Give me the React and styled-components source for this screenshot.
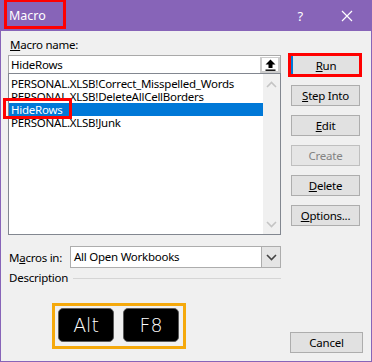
import styled, { createGlobalStyle } from "styled-components";

const GlobalStyle = createGlobalStyle`
  html, body {
    margin: 0;
    padding: 0;
    background: #f0f0f0;
  }
  body {
    font-family: "Noto Sans", "Liberation Sans", sans-serif;
    font-size: 11.5px;
    letter-spacing: -0.25px;
  }
`;

const macros = [
  "PERSONAL.XLSB!Correct_Misspelled_Words",
  "PERSONAL.XLSB!DeleteAllCellBorders",
  "HideRows",
  "PERSONAL.XLSB!Junk",
];

const buttons = [
  { key: "run", label: "Run", hot: "R", primary: true },
  { key: "step", label: "Step Into", hot: "S" },
  { key: "edit", label: "Edit", hot: "E" },
  { key: "create", label: "Create", disabled: true },
  { key: "delete", label: "Delete", hot: "D" },
  { key: "options", label: "Options...", hot: "O" },
];

const Mnemonic = ({ text, hot }) => {
  if (!hot) return text;
  const i = text.indexOf(hot);
  return (
    <>
      {text.slice(0, i)}
      <u>{hot}</u>
      {text.slice(i + 1)}
    </>
  );
};

const Chevron = ({ up, color }) => (
  <svg width="11" height="7" viewBox="0 0 11 7">
    <path
      d={up ? "M1 6 L5.5 1.5 L10 6" : "M1 1 L5.5 5.5 L10 1"}
      fill="none"
      stroke={color}
      strokeWidth="1.6"
    />
  </svg>
);

const App = () => {
  return (
    <>
      <GlobalStyle />
      <Dialog>
        <TitleBar>
          <TitleText>
            Macro
            <Highlight />
          </TitleText>
          <TitleIcons>
            <HelpMark>?</HelpMark>
            <svg width="12" height="12" viewBox="0 0 12 12">
              <path d="M1 1 L11 11 M11 1 L1 11" stroke="#fff" strokeWidth="1.2" />
            </svg>
          </TitleIcons>
        </TitleBar>
        <Body>
          <LeftCol>
            <Label>
              <u>M</u>acro name:
            </Label>
            <NameInput>
              <NameValue>HideRows</NameValue>
              <PickButton>
                <svg width="11" height="12" viewBox="0 0 11 12">
                  <path d="M5.5 0.5 L10.5 5.5 L7.5 5.5 L7.5 9 L3.5 9 L3.5 5.5 L0.5 5.5 Z" fill="#000" />
                  <rect x="0.5" y="10.5" width="10" height="1.4" fill="#000" />
                </svg>
              </PickButton>
            </NameInput>
            <ListBox>
              <Items>
                {macros.map((m) => (
                  <Item key={m} $selected={m === "HideRows"}>
                    {m}
                    {m === "HideRows" && <ItemHighlight />}
                  </Item>
                ))}
              </Items>
              <ScrollTrack>
                <Chevron up color="#c4c4c4" />
                <Chevron color="#c4c4c4" />
              </ScrollTrack>
            </ListBox>
            <MacrosRow>
              <RowLabel>
                M<u>a</u>cros in:
              </RowLabel>
              <Select>
                <SelectValue>All Open Workbooks</SelectValue>
                <SelectButton>
                  <Chevron color="#444" />
                </SelectButton>
              </Select>
            </MacrosRow>
            <DescriptionRow>
              Description
              <Rule />
            </DescriptionRow>
            <KeysBox>
              <Key>Alt</Key>
              <Key>F8</Key>
            </KeysBox>
          </LeftCol>
          <RightCol>
            {buttons.map((b) => (
              <Button key={b.key} $primary={b.primary} disabled={b.disabled}>
                <Mnemonic text={b.label} hot={b.hot} />
                {b.primary && <ButtonHighlight />}
              </Button>
            ))}
            <CancelButton>Cancel</CancelButton>
          </RightCol>
        </Body>
      </Dialog>
    </>
  );
};

const Dialog = styled.div`
  width: 372px;
  height: 362px;
  box-sizing: border-box;
  border: 1px solid #8764b8;
  border-top: none;
  background: #f0f0f0;
  display: flex;
  flex-direction: column;
  color: #000;
`;

const TitleBar = styled.div`
  height: 31px;
  margin: 0 -1px;
  background: #8764b8;
  display: flex;
  align-items: center;
  justify-content: space-between;
  color: #fff;
  flex-shrink: 0;
`;

const TitleText = styled.div`
  position: relative;
  margin-left: 9px;
  font-size: 12.5px;
  line-height: 16px;
  letter-spacing: 0;
`;

const Highlight = styled.span`
  position: absolute;
  left: -5px;
  right: -20px;
  top: -9px;
  bottom: -5px;
  border: 3px solid #ff0000;
`;

const TitleIcons = styled.div`
  display: flex;
  align-items: center;
  gap: 38px;
  margin-right: 19px;
`;

const HelpMark = styled.span`
  font-size: 13px;
`;

const Body = styled.div`
  flex: 1;
  display: flex;
`;

const LeftCol = styled.div`
  width: 273px;
  margin-left: 7px;
  display: flex;
  flex-direction: column;
`;

const Label = styled.div`
  margin-top: 6px;
  margin-left: 2px;
  line-height: 16px;
`;

const NameInput = styled.div`
  margin-top: 2px;
  height: 18px;
  box-sizing: border-box;
  border: 1px solid #a9a9a9;
  border-bottom: none;
  background: #fff;
  display: flex;
  align-items: center;
  justify-content: space-between;
`;

const NameValue = styled.span`
  padding-left: 2px;
  line-height: 16px;
`;

const PickButton = styled.div`
  width: 20px;
  height: 16px;
  margin-top: 1px;
  box-sizing: border-box;
  border: 2px solid #cccccc;
  border-top-width: 1px;
  display: flex;
  align-items: center;
  justify-content: center;
`;

const ListBox = styled.div`
  height: 162px;
  box-sizing: border-box;
  border: 1px solid #828790;
  background: #fff;
  display: flex;
`;

const Items = styled.div`
  flex: 1;
  padding-top: 3px;
`;

const Item = styled.div`
  position: relative;
  height: 13px;
  line-height: 13px;
  padding-left: 2px;
  white-space: nowrap;
  background: ${(p) => (p.$selected ? "#0078d7" : "transparent")};
  color: ${(p) => (p.$selected ? "#fff" : "#000")};
`;

const ItemHighlight = styled.span`
  position: absolute;
  left: -6px;
  top: -5px;
  width: 69px;
  height: 21px;
  box-sizing: border-box;
  border: 3px solid #ff0000;
`;

const ScrollTrack = styled.div`
  width: 17px;
  background: #f0f0f0;
  display: flex;
  flex-direction: column;
  align-items: center;
  justify-content: space-between;
  padding: 7px 0 6px;
`;

const MacrosRow = styled.div`
  margin-top: 11px;
  display: flex;
  align-items: center;
`;

const RowLabel = styled.span`
  width: 61px;
  padding-left: 1px;
`;

const Select = styled.div`
  flex: 1;
  height: 22px;
  box-sizing: border-box;
  border: 1px solid #adadad;
  background: #fff;
  display: flex;
  align-items: stretch;
`;

const SelectValue = styled.span`
  flex: 1;
  padding-left: 3px;
  line-height: 20px;
`;

const SelectButton = styled.span`
  width: 18px;
  background: #e5e5e5;
  border-left: 1px solid #adadad;
  display: flex;
  align-items: center;
  justify-content: center;
`;

const DescriptionRow = styled.div`
  margin-top: 2px;
  padding-left: 1px;
  line-height: 16px;
  display: flex;
  align-items: center;
  gap: 5px;
`;

const Rule = styled.span`
  flex: 1;
  height: 1px;
  background: #d5d5d5;
`;

const KeysBox = styled.div`
  margin: 17px 0 0 44px;
  width: 134px;
  height: 46px;
  box-sizing: border-box;
  border: 3px solid #f5a90c;
  display: flex;
  gap: 9px;
  padding: 2px 3px;
`;

const Key = styled.div`
  width: 56px;
  height: 34px;
  box-sizing: border-box;
  border: 1px solid #5a5a5a;
  border-radius: 5px;
  background: #000;
  color: #fff;
  font-family: "DejaVu Sans", sans-serif;
  font-weight: 300;
  font-size: 19px;
  letter-spacing: 0;
  display: flex;
  align-items: center;
  justify-content: center;
`;

const RightCol = styled.div`
  flex: 1;
  display: flex;
  flex-direction: column;
  align-items: flex-start;
  padding: 24px 0 8px 10px;
  gap: 9px;
`;

const Button = styled.button`
  position: relative;
  width: 69px;
  height: 21px;
  padding: 0;
  box-sizing: border-box;
  font: inherit;
  letter-spacing: inherit;
  background: #e1e1e1;
  border: 1px solid ${(p) => (p.$primary ? "#0078d7" : "#adadad")};
  border-left-width: ${(p) => (p.$primary ? "2px" : "1px")};
  color: #000;

  &:disabled {
    color: #838383;
    border-color: #bfbfbf;
    background: #e5e5e5;
  }
`;

const ButtonHighlight = styled.span`
  position: absolute;
  left: -5px;
  right: -3px;
  top: -3px;
  bottom: -2px;
  border: 3px solid #ff0000;
`;

const CancelButton = styled(Button)`
  margin-top: auto;
  margin-left: -1px;
  width: 73px;
`;

export default App;
